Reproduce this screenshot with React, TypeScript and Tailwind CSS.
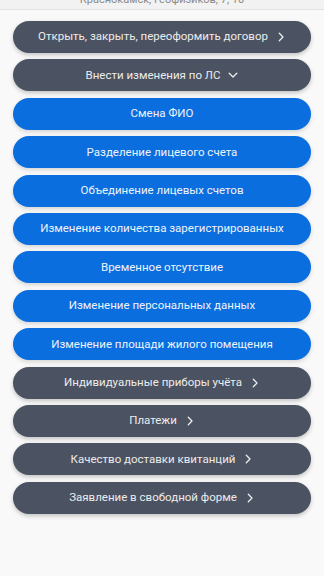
import React from "react";

type Item = {
  label: string;
  variant: "dark" | "blue";
  icon?: "right" | "down";
};

const items: Item[] = [
  { label: "Открыть, закрыть, переоформить договор", variant: "dark", icon: "right" },
  { label: "Внести изменения по ЛС", variant: "dark", icon: "down" },
  { label: "Смена ФИО", variant: "blue" },
  { label: "Разделение лицевого счета", variant: "blue" },
  { label: "Объединение лицевых счетов", variant: "blue" },
  { label: "Изменение количества зарегистрированных", variant: "blue" },
  { label: "Временное отсутствие", variant: "blue" },
  { label: "Изменение персональных данных", variant: "blue" },
  { label: "Изменение площади жилого помещения", variant: "blue" },
  { label: "Индивидуальные приборы учёта", variant: "dark", icon: "right" },
  { label: "Платежи", variant: "dark", icon: "right" },
  { label: "Качество доставки квитанций", variant: "dark", icon: "right" },
  { label: "Заявление в свободной форме", variant: "dark", icon: "right" },
];

const Chevron: React.FC<{ dir: "right" | "down" }> = ({ dir }) => (
  <svg
    width="10"
    height="10"
    viewBox="0 0 10 10"
    fill="none"
    stroke="currentColor"
    strokeWidth="1.3"
    strokeLinecap="round"
    strokeLinejoin="round"
  >
    {dir === "right" ? (
      <path d="M3.3 1.2 L7 5 L3.3 8.8" />
    ) : (
      <path d="M1.2 3.2 L5 7 L8.8 3.2" />
    )}
  </svg>
);

const App: React.FC = () => {
  return (
    <div
      className="min-h-[576px] bg-[#f9f9f9]"
      style={{ fontFamily: "Roboto, 'Noto Sans', sans-serif" }}
    >
      {/* Header (scrolled, only the address line shows) */}
      <div className="h-[10px] overflow-hidden bg-[#f2f2f2] border-b border-[#e2e2e2]">
        <div className="-mt-[7px] text-center text-[11px] leading-[14px] text-[#8a8a8a]">
          Краснокамск, Геофизиков, 7, 10
        </div>
      </div>

      {/* Menu */}
      <div className="flex flex-col gap-[6.4px] px-[13px] pt-[11px]">
        {items.map((item) => (
          <button
            key={item.label}
            className={
              item.variant === "dark"
                ? "flex h-[32px] w-full items-center justify-center gap-[8px] rounded-full bg-[#4b5261] text-[11.5px] text-[#ececec] shadow-[0_2px_4px_rgba(0,0,0,0.22)]"
                : "flex h-[32px] w-full items-center justify-center gap-[8px] rounded-full bg-[#0b6edf] text-[11.5px] text-[#eef3fb] shadow-[0_2px_4px_rgba(0,0,0,0.15)]"
            }
          >
            <span>{item.label}</span>
            {item.icon && <Chevron dir={item.icon} />}
          </button>
        ))}
      </div>
    </div>
  );
};

export default App;
